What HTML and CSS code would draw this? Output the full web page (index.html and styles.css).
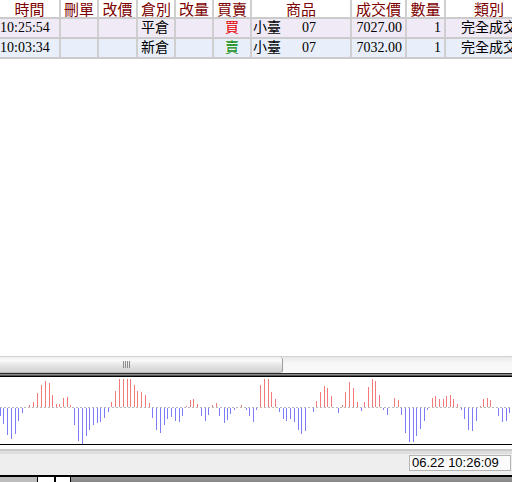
FILE: index.html
```
<!DOCTYPE html>
<html lang="zh-Hant">
<head>
<meta charset="utf-8">
<title>成交回報</title>
<link rel="stylesheet" href="styles.css">
</head>
<body>
<div class="app">
  <div class="grid">
    <div class="row head">
      <div class="c">時間</div><div class="c">刪單</div><div class="c">改價</div><div class="c">倉別</div><div class="c">改量</div><div class="c">買賣</div><div class="c">商品</div><div class="c">成交價</div><div class="c">數量</div><div class="c">類別</div>
    </div>
    <div class="row r1">
      <div class="c time">10:25:54</div><div class="c"></div><div class="c"></div><div class="c left">平倉</div><div class="c"></div><div class="c mid buy">買</div><div class="c left prod"><span>小臺</span><span class="month">07</span></div><div class="c right">7027.00</div><div class="c right">1</div><div class="c mid">完全成交</div>
    </div>
    <div class="row r2">
      <div class="c time">10:03:34</div><div class="c"></div><div class="c"></div><div class="c left">新倉</div><div class="c"></div><div class="c mid sell">賣</div><div class="c left prod"><span>小臺</span><span class="month">07</span></div><div class="c right">7032.00</div><div class="c right">1</div><div class="c mid">完全成交</div>
    </div>
  </div>
  <div class="hscroll">
    <div class="thumb"><span class="grip"><i></i><i></i><i></i><i></i></span></div>
    <div class="track"></div>
  </div>
  <div class="chart-edge"></div>
  <div class="chart">
    <svg width="512" height="67" viewBox="0 0 512 67">
      <line x1="0" y1="30.5" x2="512" y2="30.5" stroke="#b9b9b9" stroke-width="1" stroke-dasharray="2 2"/>
      <path fill="none" stroke="#f27a7a" stroke-width="1" d="M29.5 30v-2M33.5 30v-5M37.5 30v-14M41.5 30v-22M45.5 30v-26M49.5 30v-24M52.5 30v-12M56.5 30v-3M59.5 30v-3M63.5 30v-9M67.5 30v-10M70.5 30v-2M111.5 30v-5M115.5 30v-16M119.5 30v-28M123.5 30v-28M127.5 30v-28M130.5 30v-28M134.5 30v-22M137.5 30v-16M141.5 30v-15M145.5 30v-12M149.5 30v-4M186.5 30v-1M190.5 30v-7M193.5 30v-8M197.5 30v-3M212.5 30v-2M216.5 30v-4M241.5 30v-2M260.5 30v-22M264.5 30v-28M268.5 30v-28M271.5 30v-15M275.5 30v-8M316.5 30v-6M320.5 30v-15M324.5 30v-21M327.5 30v-19M331.5 30v-11M342.5 30v-2M345.5 30v-15M349.5 30v-25M353.5 30v-19M357.5 30v-5M364.5 30v-5M368.5 30v-20M372.5 30v-28M375.5 30v-26M379.5 30v-12M394.5 30v-9M398.5 30v-7M432.5 30v-9M435.5 30v-11M439.5 30v-8M443.5 30v-8M446.5 30v-11M450.5 30v-12M453.5 30v-8M457.5 30v-3M480.5 30v-1M483.5 30v-8M487.5 30v-9M490.5 30v-7"/>
      <path fill="none" stroke="#7c7cf6" stroke-width="1" d="M0.5 31v8M3.5 31v16M7.5 31v27M11.5 31v31M15.5 31v26M18.5 31v13M22.5 31v5M74.5 31v17M78.5 31v33M82.5 31v36M86.5 31v28M89.5 31v22M93.5 31v17M97.5 31v15M100.5 31v14M104.5 31v10M108.5 31v4M152.5 31v10M156.5 31v22M160.5 31v25M164.5 31v17M167.5 31v11M171.5 31v9M175.5 31v13M179.5 31v14M182.5 31v8M201.5 31v8M205.5 31v13M208.5 31v7M219.5 31v8M224.5 31v15M227.5 31v12M230.5 31v6M234.5 31v2M246.5 31v2M249.5 31v8M253.5 31v14M256.5 31v2M279.5 31v4M283.5 31v11M286.5 31v13M290.5 31v11M294.5 31v14M298.5 31v22M301.5 31v26M305.5 31v23M313.5 31v4M338.5 31v5M361.5 31v3M383.5 31v2M387.5 31v7M401.5 31v7M405.5 31v25M409.5 31v34M413.5 31v34M416.5 31v28M420.5 31v21M424.5 31v13M427.5 31v2M461.5 31v2M464.5 31v11M468.5 31v22M472.5 31v23M476.5 31v13M498.5 31v8M502.5 31v14M506.5 31v13M509.5 31v5"/>
    </svg>
  </div>
  <div class="status">
    <div class="clock">06.22 10:26:09</div>
  </div>
  <div class="taskbar">
    <div class="tb-left"></div>
    <div class="tb-box"></div>
    <div class="tb-box small"></div>
    <div class="tb-rest"></div>
  </div>
</div>
</body>
</html>
```
FILE: styles.css
```
html, body {
  margin: 0;
  padding: 0;
  background: #fff;
}
.app {
  width: 512px;
  height: 482px;
  overflow: hidden;
  display: flex;
  flex-direction: column;
  font-family: "Liberation Serif", "Noto Sans CJK TC", serif;
}
.grid {
  height: 356px;
  flex: none;
  background: #fff;
}
.row {
  display: grid;
  grid-template-columns: 61px 38px 39px 38px 38px 38px 100px 55px 39px 88px;
  width: 534px;
  border-bottom: 2px solid #cbcbcb;
}
.c {
  box-sizing: border-box;
  border-right: 2px solid #cfcfcf;
  white-space: nowrap;
}
.head .c {
  height: 17px;
  line-height: 17px;
  font-size: 15px;
  color: #7d0000;
  text-align: center;
  font-family: "Noto Sans CJK TC", sans-serif;
}
.r1, .r2 {
  font-size: 14px;
  color: #000;
}
.r1 { background: #f0eaf6; }
.r2 { background: #e8effa; }
.r1 .c, .r2 .c {
  height: 18px;
  line-height: 18px;
}
.time { padding-left: 0; }
.left { padding-left: 3px; }
.right { text-align: right; padding-right: 3px; }
.mid { text-align: center; }
.prod { padding-left: 1px; }
.month { margin-left: 21px; }
.buy { color: #e30000; }
.sell { color: #139013; }

.hscroll {
  height: 16px;
  flex: none;
  display: flex;
  border-top: 1px solid #d2d2d2;
}
.thumb {
  width: 283px;
  box-sizing: border-box;
  border-right: 1px solid #9c9c9c;
  border-bottom: 1px solid #bcbcbc;
  border-radius: 0 3px 3px 0;
  background: linear-gradient(to bottom, #eeeeee 0%, #fafafa 22%, #e8e8e8 50%, #dadada 80%, #d4d4d4 100%);
  display: flex;
  align-items: center;
  padding-left: 123px;
}
.grip {
  display: flex;
  gap: 1px;
  height: 7px;
}
.grip i {
  width: 1px;
  height: 7px;
  background: #8c8c8c;
}
.track {
  flex: 1;
  background: linear-gradient(to bottom, #e9e9e9, #f7f7f7 40%, #f9f9f9);
}
.chart-edge {
  height: 4px;
  flex: none;
  background: linear-gradient(to bottom, #2a2a2a 0 1px, #8a8a8a 1px 2px, #555 2px 3px, #000 3px 4px);
}
.chart {
  height: 67px;
  flex: none;
  background: #fff;
  border-bottom: 1px solid #000;
}
.chart svg { display: block; }
.status {
  height: 30px;
  flex: none;
  box-sizing: border-box;
  background: linear-gradient(to bottom, #fff 0 4px, #c9c9c9 4px 6px, #dedede 6px 9px, #eeeeee 9px 100%);
  display: flex;
  justify-content: flex-end;
  align-items: flex-start;
  padding-top: 10px;
  padding-right: 1px;
}
.clock {
  width: 102px;
  height: 16px;
  box-sizing: border-box;
  border: 1px solid #b4b4b4;
  background: #fbfbfb;
  font-family: "Liberation Sans", sans-serif;
  font-size: 13px;
  line-height: 14px;
  padding-left: 2px;
  color: #000;
}
.taskbar {
  flex: none;
  height: 5px;
  border-top: 2px solid #000;
  display: flex;
}
.tb-left {
  width: 37px;
  background: #bdbdbd;
  border-right: 1px solid #000;
}
.tb-box {
  width: 16px;
  background: #fff;
  border-right: 2px solid #000;
}
.tb-box.small {
  width: 14px;
  border-right: 1px solid #000;
}
.tb-rest {
  flex: 1;
  background: linear-gradient(to bottom, #9a9a9a, #858585);
}
```
